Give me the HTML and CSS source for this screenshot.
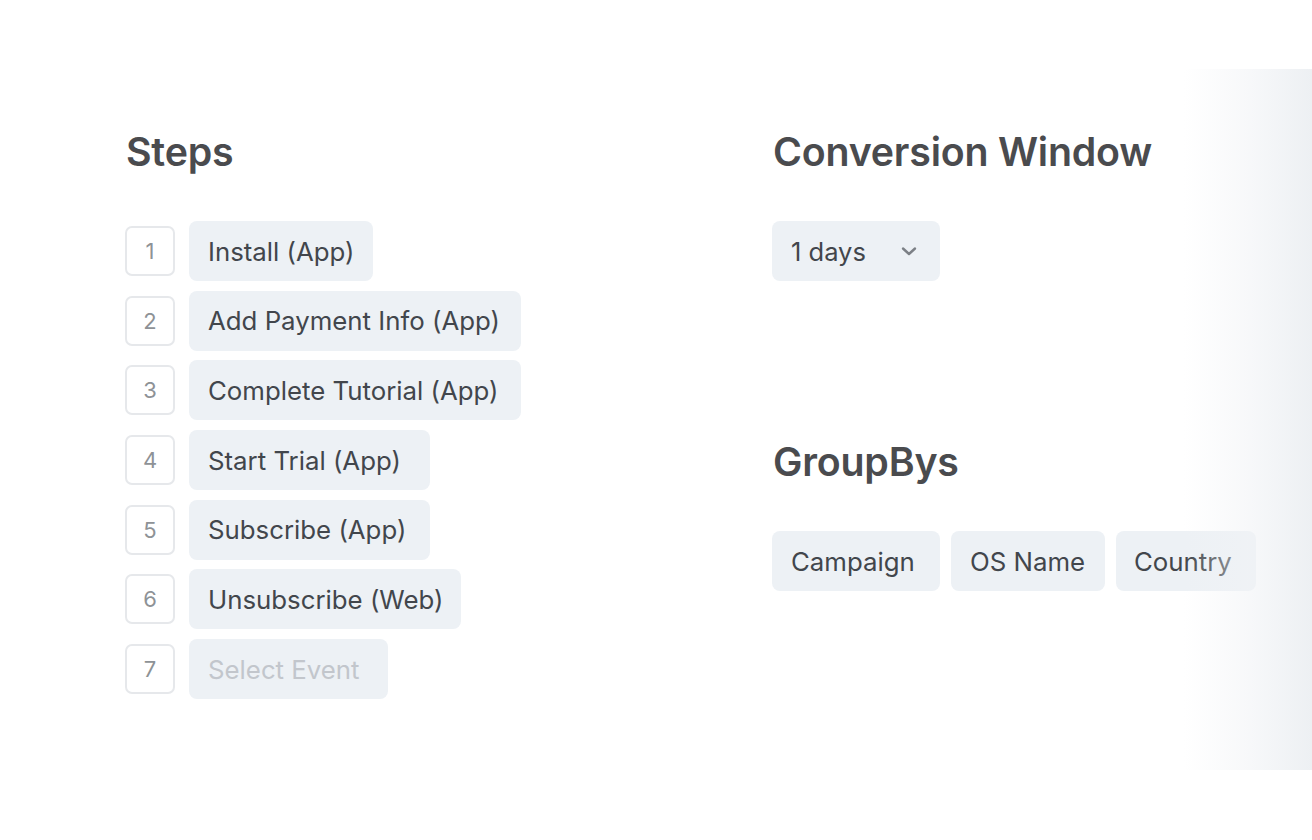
FILE: index.html
```html
<!DOCTYPE html>
<html lang="en">
<head>
<meta charset="utf-8">
<title>Funnel</title>
<link rel="stylesheet" href="styles.css">
</head>
<body>
<main class="page">
  <section class="col col-steps">
    <h2 class="heading">Steps</h2>
    <ol class="steps">
      <li class="step"><span class="num">1</span><span class="pill w-install">Install (App)</span></li>
      <li class="step"><span class="num">2</span><span class="pill w-wide">Add Payment Info (App)</span></li>
      <li class="step"><span class="num">3</span><span class="pill w-wide">Complete Tutorial (App)</span></li>
      <li class="step"><span class="num">4</span><span class="pill w-mid">Start Trial (App)</span></li>
      <li class="step"><span class="num">5</span><span class="pill w-mid">Subscribe (App)</span></li>
      <li class="step"><span class="num">6</span><span class="pill w-unsub">Unsubscribe (Web)</span></li>
      <li class="step"><span class="num">7</span><span class="pill w-select placeholder">Select Event</span></li>
    </ol>
  </section>
  <section class="col col-options">
    <h2 class="heading">Conversion Window</h2>
    <div class="select">
      <span>1 days</span>
      <svg class="chev" width="18" height="18" viewBox="0 0 18 18" fill="none"><path d="M3 6.5l6 5.5 6-5.5" stroke="currentColor" stroke-width="2.4" stroke-linecap="round" stroke-linejoin="round"/></svg>
    </div>
    <h2 class="heading heading-group">GroupBys</h2>
    <div class="groups">
      <span class="pill w-campaign">Campaign</span>
      <span class="pill w-os">OS Name</span>
      <span class="pill w-country">Country</span>
    </div>
  </section>
  <div class="fade"></div>
</main>
</body>
</html>
```
FILE: styles.css
```css
* { box-sizing: border-box; }
html, body { margin: 0; padding: 0; background: #ffffff; }
body {
  font-family: Inter, "Noto Sans", "Liberation Sans", sans-serif;
  color: #43474c;
  width: 1312px;
  height: 840px;
  overflow: hidden;
}
.page {
  position: relative;
  display: grid;
  grid-template-columns: 647px 1fr;
  padding: 128px 0 0 125px;
  height: 840px;
}
.heading {
  margin: 0 0 45px 1px;
  font-size: 39.3px;
  line-height: 48px;
  font-weight: 600;
  color: #4a4b4e;
  letter-spacing: -0.2px;
}
.steps {
  list-style: none;
  margin: 0;
  padding: 0;
  display: flex;
  flex-direction: column;
  gap: 9.7px;
}
.step {
  display: flex;
  align-items: center;
  gap: 14px;
}
.num {
  width: 50px;
  height: 50px;
  border: 2px solid #e6e8eb;
  border-radius: 7px;
  display: flex;
  align-items: center;
  justify-content: center;
  font-size: 22px;
  color: #8e9296;
}
.pill {
  display: inline-flex;
  align-items: center;
  height: 60px;
  padding: 0 19px;
  background: #edf1f5;
  border-radius: 8px;
  font-size: 25.8px;
  color: #42464c;
  white-space: nowrap;
}
.w-install { width: 184px; }
.w-wide { width: 332px; }
.w-mid { width: 241px; }
.w-unsub { width: 272px; }
.w-select { width: 199px; }
.w-campaign { width: 168px; }
.w-os { width: 154px; }
.w-country { width: 140px; padding-left: 18px; }
.pill.placeholder { color: #c2c6cc; }
.select {
  display: inline-flex;
  align-items: center;
  width: 168px;
  height: 60px;
  padding: 0 22px 0 19px;
  justify-content: space-between;
  background: #edf1f5;
  border-radius: 8px;
  font-size: 25.5px;
  color: #42464c;
}
.chev { color: #7c8086; width: 18px; height: 18px; }
.heading-group { margin-top: 157px; }
.groups {
  display: flex;
  gap: 11px;
}
.fade {
  position: absolute;
  left: 1184px;
  right: 0;
  top: 69px;
  bottom: 70px;
  background: linear-gradient(to right, rgba(245,247,249,0) 0%, rgba(241,243,246,0.55) 50%, #edf0f3 100%);
  pointer-events: none;
}
```
